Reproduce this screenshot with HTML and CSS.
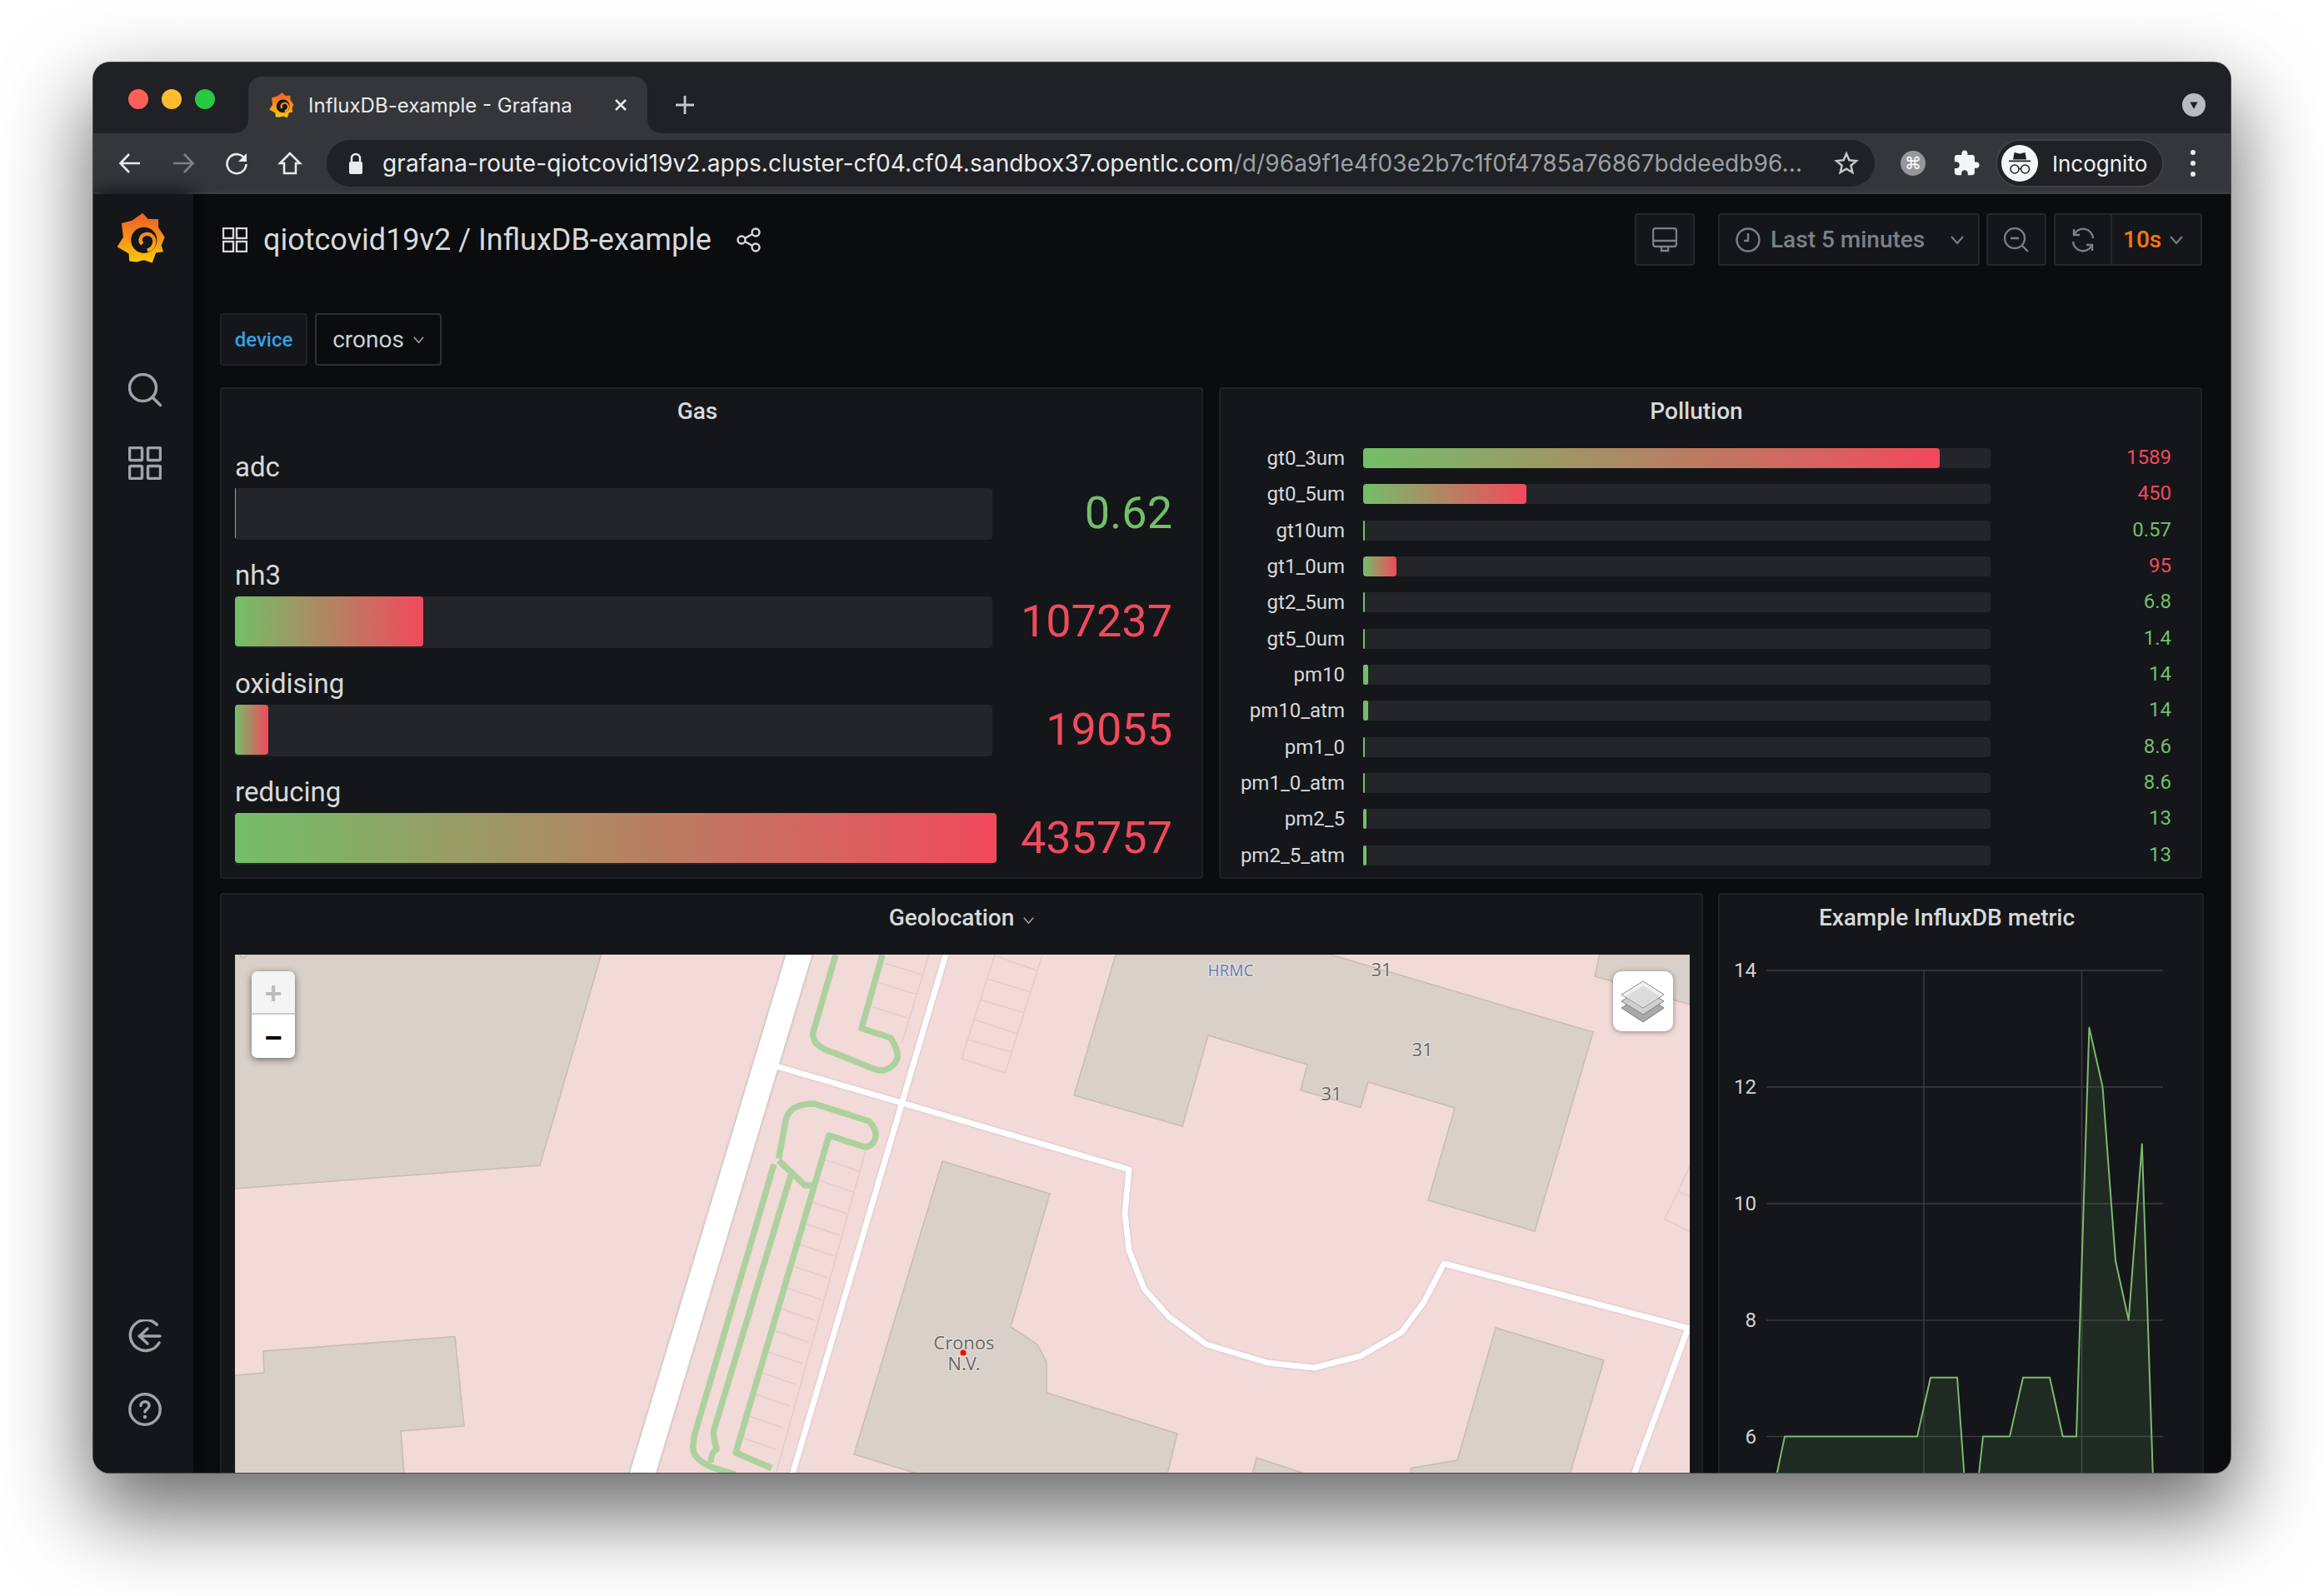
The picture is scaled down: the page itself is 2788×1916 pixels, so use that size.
FILE: index.html
```html
<!DOCTYPE html>
<html lang="en">
<head>
<meta charset="utf-8">
<title>InfluxDB-example - Grafana</title>
<link rel="stylesheet" href="styles.css">
</head>
<body>
<svg class="defs" width="0" height="0">
  <defs>
    <linearGradient id="gf" gradientUnits="userSpaceOnUse" x1="0" y1="48" x2="0" y2="228">
      <stop offset="0" stop-color="#f05a28"/><stop offset="1" stop-color="#fbca0a"/>
    </linearGradient>
    <symbol id="grafana" viewBox="20 40 190 195">
      <path fill="url(#gf)" d="M120 48L140 70 177 70 177 100 200 135 188 165 195 188 168 192 155 228 125 218 98 225 72 222 70 195 28 170 50 135 44 85 82 75z"/>
      <circle fill="#141619" cx="125" cy="146" r="47"/>
      <path fill="none" stroke="url(#gf)" stroke-width="13" d="M119 160c-12-10-8-32 12-36 20-3 35 13 31 33-3 14-13 23-25 26"/>
    </symbol>
  </defs>
</svg>
<div class="window">
  <header class="tabstrip">
    <div class="lights"><i class="light red"></i><i class="light amber"></i><i class="light green"></i></div>
    <div class="tab">
      <svg class="favicon"><use href="#grafana"/></svg>
      <span class="tab-title">InfluxDB-example - Grafana</span>
      <svg class="tab-close" viewBox="0 0 16 16"><path d="M2 2l12 12M14 2L2 14"/></svg>
    </div>
    <svg class="tab-new" viewBox="0 0 24 24"><path d="M12 1v22M1 12h22"/></svg>
    <div class="tab-menu"><svg viewBox="0 0 12 12"><path d="M2 3h8L6 10z"/></svg></div>
  </header>
  <div class="toolbar">
    <div class="nav"><svg class="ico-chrome" viewBox="0 0 30 30"><path d="M27 15H4M14 4L3.500 15 14 26"/></svg></div>
    <div class="nav dim"><svg class="ico-chrome" viewBox="0 0 30 30"><path d="M3 15h23M16 4l10.500 11L16 26"/></svg></div>
    <div class="nav"><svg class="ico-chrome" viewBox="0 0 30 30"><path d="M25 10A11.500 11.500 0 1 0 26.500 16"/><path class="solid" d="M27 3v10H17z"/></svg></div>
    <div class="nav"><svg class="ico-chrome" viewBox="0 0 30 30"><path d="M15 3L3 15h5v12h14V15h5z"/></svg></div>
    <div class="omnibox">
      <svg class="lock" viewBox="0 0 20 28"><path d="M5 12V8a5 5 0 0 1 10 0v4" fill="none" stroke="#e8eaed" stroke-width="2.500"/><rect x="2" y="12" width="16" height="15" rx="2" fill="#e8eaed"/></svg>
      <div class="url"><span class="host">grafana-route-qiotcovid19v2.apps.cluster-cf04.cf04.sandbox37.opentlc.com</span><span class="path">/d/96a9f1e4f03e2b7c1f0f4785a76867bddeedb96...</span></div>
      <svg class="star" viewBox="0 0 30 30"><path d="M15 3.500l3.400 7.800 8.400.8-6.400 5.600 1.900 8.300-7.300-4.400-7.300 4.400 1.900-8.300-6.400-5.600 8.400-.8z"/></svg>
    </div>
    <div class="ext"><span class="ext-cmd">⌘</span></div>
    <div class="ext"><svg class="puzzle" viewBox="0 0 24 24"><path d="M20.500 11H19V7c0-1.100-.9-2-2-2h-4V3.500C13 2.120 11.880 1 10.500 1S8 2.120 8 3.500V5H4c-1.100 0-1.990.9-1.990 2v3.800H3.500c1.490 0 2.700 1.210 2.700 2.700s-1.210 2.700-2.700 2.700H2V20c0 1.100.9 2 2 2h3.800v-1.500c0-1.490 1.210-2.700 2.700-2.700 1.490 0 2.700 1.210 2.700 2.700V22H17c1.100 0 2-.9 2-2v-4h1.500c1.380 0 2.500-1.120 2.500-2.500S21.880 11 20.500 11z"/></svg></div>
    <div class="profile">
      <svg class="incog" viewBox="0 0 44 44"><circle cx="22" cy="22" r="22" fill="#f4f5f6"/><path fill="#202124" d="M15.500 9l6.500 1.500L28.500 9l1.500 8.500H14z"/><path d="M9 19.300h26" stroke="#202124" stroke-width="1.800"/><g fill="none" stroke="#202124" stroke-width="1.500"><circle cx="16" cy="29" r="5"/><circle cx="28.500" cy="29" r="5"/><path d="M21 28.500h2.500"/></g></svg>
      <span class="profile-name">Incognito</span>
    </div>
    <div class="kebab"><i></i><i></i><i></i></div>
  </div>
  <div class="app">
    <nav class="sidebar">
      <svg class="logo"><use href="#grafana"/></svg>
      <svg class="side-ico first" viewBox="0 0 40 40"><circle cx="17.500" cy="17.500" r="16"/><path d="M29 29l9.500 9.500"/></svg>
      <svg class="side-ico" viewBox="0 0 40 40"><rect x="1.500" y="1.500" width="15" height="15" rx="1.500"/><rect x="23.500" y="1.500" width="15" height="15" rx="1.500"/><rect x="1.500" y="23.500" width="15" height="15" rx="1.500"/><rect x="23.500" y="23.500" width="15" height="15" rx="1.500"/></svg>
      <div class="side-spacer"></div>
      <svg class="side-ico" viewBox="0 0 40 40"><path d="M34.300 6.300A18.500 18.500 0 1 0 37 28"/><path d="M38 20H13M23 11l-9.500 9 9.500 9"/></svg>
      <svg class="side-ico" viewBox="0 0 40 40"><circle cx="20" cy="20" r="18.200"/><path d="M15 15.500c0-6.500 10-6.500 10 0 0 4-5 4-5 7.500"/><circle class="solid" cx="20" cy="29" r="2.200"/></svg>
    </nav>
    <main class="main">
      <div class="topbar">
        <svg class="title-ico" viewBox="0 0 30 30"><rect x="1" y="1" width="12" height="12"/><rect x="17" y="1" width="12" height="12"/><rect x="1" y="17" width="12" height="12"/><rect x="17" y="17" width="12" height="12"/></svg>
        <h1 class="dash-title">qiotcovid19v2 / InfluxDB-example</h1>
        <svg class="share-ico" viewBox="0 0 30 30"><circle cx="23" cy="6" r="4.500"/><circle cx="6" cy="15" r="4.500"/><circle cx="23" cy="24" r="4.500"/><path d="M10 13l9-5M10 17l9 5"/></svg>
        <div class="top-actions">
          <button class="tbtn square"><svg class="tb-ico" viewBox="0 0 30 30"><rect x="1" y="1" width="28" height="22" rx="3"/><path d="M1 16h28M11 23v5h8v-5"/></svg></button>
          <button class="tbtn range"><svg class="tb-ico" viewBox="0 0 30 30"><circle cx="15" cy="15" r="13.500"/><path d="M15 7v9H10"/></svg><span class="range-text">Last 5 minutes</span><svg class="chev big" viewBox="0 0 16 10"><path d="M1 1l7 8 7-8"/></svg></button>
          <button class="tbtn square tight"><svg class="tb-ico" viewBox="0 0 30 30"><circle cx="13" cy="13" r="12"/><path d="M8 13h10M22 22l7 7"/></svg></button>
          <div class="tbtn refresh">
            <div class="refresh-left"><svg class="tb-ico" viewBox="0 0 30 30"><path d="M4 2v7h7M4 9A12 12 0 0 1 27 13M26 28v-7h-7M26 21A12 12 0 0 1 3 17"/></svg></div>
            <div class="refresh-right"><span class="interval">10s</span><svg class="chev" viewBox="0 0 16 10"><path d="M1 1l7 8 7-8"/></svg></div>
          </div>
        </div>
      </div>
      <div class="varrow">
        <span class="var-label">device</span>
        <span class="var-value">cronos<svg class="chev small" viewBox="0 0 16 10"><path d="M1 1l7 8 7-8"/></svg></span>
      </div>
      <section class="row-a">
        <article class="panel">
          <h2 class="panel-title">Gas</h2>
          <div class="gauge">
            <div class="gauge-name">adc</div>
            <div class="gauge-track"><div class="gauge-fill thin" style="width:0.11%"></div></div>
            <div class="gauge-val ok">0.62</div>
          </div>
          <div class="gauge">
            <div class="gauge-name">nh3</div>
            <div class="gauge-track"><div class="gauge-fill" style="width:24.86%"></div></div>
            <div class="gauge-val bad">107237</div>
          </div>
          <div class="gauge">
            <div class="gauge-name">oxidising</div>
            <div class="gauge-track"><div class="gauge-fill" style="width:4.4%"></div></div>
            <div class="gauge-val bad">19055</div>
          </div>
          <div class="gauge">
            <div class="gauge-name">reducing</div>
            <div class="gauge-track"><div class="gauge-fill" style="width:100.5%"></div></div>
            <div class="gauge-val bad">435757</div>
          </div>
        </article>
        <article class="panel">
          <h2 class="panel-title">Pollution</h2>
          <div class="hbars">
            <div class="hbar"><span class="hbar-name">gt0_3um</span><div class="hbar-track"><div class="hbar-fill" style="width:91.9%"></div></div><span class="hbar-val bad">1589</span></div>
            <div class="hbar"><span class="hbar-name">gt0_5um</span><div class="hbar-track"><div class="hbar-fill" style="width:26%"></div></div><span class="hbar-val bad">450</span></div>
            <div class="hbar"><span class="hbar-name">gt10um</span><div class="hbar-track"><div class="hbar-fill flat" style="width:0.3%"></div></div><span class="hbar-val ok">0.57</span></div>
            <div class="hbar"><span class="hbar-name">gt1_0um</span><div class="hbar-track"><div class="hbar-fill" style="width:5.3%"></div></div><span class="hbar-val bad">95</span></div>
            <div class="hbar"><span class="hbar-name">gt2_5um</span><div class="hbar-track"><div class="hbar-fill flat" style="width:0.3%"></div></div><span class="hbar-val ok">6.8</span></div>
            <div class="hbar"><span class="hbar-name">gt5_0um</span><div class="hbar-track"><div class="hbar-fill flat" style="width:0.3%"></div></div><span class="hbar-val ok">1.4</span></div>
            <div class="hbar"><span class="hbar-name">pm10</span><div class="hbar-track"><div class="hbar-fill flat" style="width:0.8%"></div></div><span class="hbar-val ok">14</span></div>
            <div class="hbar"><span class="hbar-name">pm10_atm</span><div class="hbar-track"><div class="hbar-fill flat" style="width:0.8%"></div></div><span class="hbar-val ok">14</span></div>
            <div class="hbar"><span class="hbar-name">pm1_0</span><div class="hbar-track"><div class="hbar-fill flat" style="width:0.3%"></div></div><span class="hbar-val ok">8.6</span></div>
            <div class="hbar"><span class="hbar-name">pm1_0_atm</span><div class="hbar-track"><div class="hbar-fill flat" style="width:0.3%"></div></div><span class="hbar-val ok">8.6</span></div>
            <div class="hbar"><span class="hbar-name">pm2_5</span><div class="hbar-track"><div class="hbar-fill flat" style="width:0.5%"></div></div><span class="hbar-val ok">13</span></div>
            <div class="hbar"><span class="hbar-name">pm2_5_atm</span><div class="hbar-track"><div class="hbar-fill flat" style="width:0.5%"></div></div><span class="hbar-val ok">13</span></div>
          </div>
        </article>
      </section>
      <section class="row-b">
        <article class="panel geo">
          <h2 class="panel-title tall">Geolocation<svg class="chev small" viewBox="0 0 16 10"><path d="M1 1l7 8 7-8"/></svg></h2>
          <div class="map">
            <svg class="map-svg" viewBox="282 1146 1746 622">
              <g class="bld">
                <path d="M282 1146H721.500L648 1399 282 1427z"/>
                <path d="M282 1651l35-3-1-26 230-17.500 11 107.500-76 6 4 52H282z"/>
                <path d="M1131 1394l129 39-47 160 32 21 11 21v37l157 49-12 49H1104l-79-24z"/>
                <path d="M1339 1146h258l315 93-70 239-128-37 32-111-104-31-9 30.500-72-20.500 8-31-119-35-31 109-130-37z"/>
                <path d="M1795 1594l130 39-41 137H1693v-7.500l56-9.500z"/>
                <path d="M1508 1750l61 20h-66z"/>
                <path d="M1919.500 1146l-5.500 26 114 34v-60z"/>
              </g>
              <circle class="corner" cx="292" cy="1146" r="4"/>
              <g class="thin">
                <path d="M1040 1377L931 1770"/>
                <path d="M987 1391l44 15M980 1416l44 15M972 1442l44 15M964 1468l44 15M957 1493l44 15M949 1519l44 15M941 1545l44 15M934 1570l44 15M926 1596l44 15M919 1622l44 15M911 1647l44 15M904 1673l44 15M896 1699l44 15M888 1725l44 15"/>
                <path d="M1115 1146l-33 107M1061 1156l46 14M1055 1180l46 14M1047 1209l46 14"/>
                <path d="M1194 1146l-40 125 52.500 17 44.500-142M1192.500 1147l52.500 18M1185 1175l52 16M1176.500 1200l53 16M1169 1224l52 17M1162 1248l52 15"/>
                <path d="M2028 1400l-30 64 30 14M2014 1430l14 6"/>
              </g>
              <g class="green">
                <path d="M1003 1146l-27 93c-2 12 8 20 25 25l50 20c12 4 24-5 26-14 1-7-3-16-8-24l-35-11.500 25-88.500"/>
                <path d="M934.500 1391l8.500-46c3-14 14-20 34-20l66 21c6 6 8 12 8 17-1 10-8 14-13 14l-43-14-112 381 43 18.500"/>
                <path d="M934.500 1393l31.500 30h11.500"/>
                <path d="M929 1397.500L834 1721c-3 14-3 20 0 25 8 14 28 18 49 24"/>
                <path d="M949 1411l-92 305c-2 8 2 18 3 24-4 2-7 8-7 16"/>
              </g>
              <g class="road">
                <polygon class="wide" points="943,1146 975,1146 787,1770 755,1770"/>
                <path d="M1135 1146L951 1770"/>
                <path d="M932 1280l423 124-5 53 5 44 18 46 30 34 45 33 73 22 56 6 55.500-14 49.500-28.500 27-36.500 24-46 295 78"/>
                <path d="M2025 1597l-64 173"/>
              </g>
              <text class="lbl blue" x="1477" y="1172">HRMC</text>
              <text class="lbl" x="1658" y="1172">31</text>
              <text class="lbl" x="1707" y="1268">31</text>
              <text class="lbl" x="1598" y="1321">31</text>
              <text class="lbl" x="1157" y="1620">Cronos</text>
              <text class="lbl" x="1157" y="1645">N.V.</text>
              <circle class="pin" cx="1156" cy="1624" r="3.500"/>
            </svg>
            <div class="zoomctl">
              <span class="zoom-btn off">+</span>
              <span class="zoom-btn">−</span>
            </div>
            <div class="layers">
              <svg viewBox="0 0 72 72">
                <path fill="#a9a9a9" stroke="#7f7f7f" d="M10 44l26-16 25 16-25 17z"/>
                <path fill="#cfcfcf" stroke="#7f7f7f" d="M10 36l26-16 25 16-25 16z"/>
                <path fill="#f1f1f1" stroke="#8d8d8d" d="M10 28L36 12l25 16-25 16z"/>
                <path fill="#dcdcdc" d="M16 30l20-13 20 13-20 13z"/>
              </svg>
            </div>
          </div>
        </article>
        <article class="panel graph">
          <h2 class="panel-title tall offset">Example InfluxDB metric</h2>
          <svg class="graph-svg" viewBox="2062 1146 583 622">
            <g class="grid">
              <path d="M2120 1165h476M2120 1305h476M2120 1445h476M2120 1585h476M2120 1724.500h476"/>
              <path d="M2309 1165v610M2498.500 1165v610"/>
            </g>
            <g class="yaxis">
              <text x="2108" y="1173">14</text>
              <text x="2108" y="1313">12</text>
              <text x="2108" y="1453">10</text>
              <text x="2108" y="1593">8</text>
              <text x="2108" y="1733">6</text>
            </g>
            <path class="area" d="M2132.400 1770L2142 1724.400H2301L2317 1653.700H2349L2357.400 1770zM2375 1770L2380 1724.400H2412L2428 1653.700H2460L2475.700 1724.400H2492L2507.400 1233.600L2523.500 1304.700L2539 1513.600L2554.700 1584.800L2570.800 1373.600L2583.800 1770z"/>
            <path class="line" d="M2132.400 1770L2142 1724.400H2301L2317 1653.700H2349L2357.400 1770M2375 1770L2380 1724.400H2412L2428 1653.700H2460L2475.700 1724.400H2492L2507.400 1233.600L2523.500 1304.700L2539 1513.600L2554.700 1584.800L2570.800 1373.600L2583.800 1770"/>
          </svg>
        </article>
      </section>
    </main>
  </div>
</div>
</body>
</html>
```
FILE: styles.css
```css
* { box-sizing: border-box; }
html, body { margin: 0; height: 100%; }
body {
  background: #fff;
  padding: 75px 111px 0 112px;
  overflow: hidden;
  font-family: Roboto, "Liberation Sans", sans-serif;
}
.defs { position: absolute; }
.window {
  width: 2565px;
  height: 1693px;
  border-radius: 20px;
  overflow: hidden;
  display: flex;
  flex-direction: column;
  background: #202124;
  box-shadow: 0 0 0 1px #4a4a4c, 0 44px 100px 6px rgba(0,0,0,.58);
}
/* browser chrome */
.tabstrip {
  height: 85px;
  flex: none;
  display: flex;
  align-items: flex-start;
  padding-left: 42px;
  background: #202124;
}
.lights { display: flex; gap: 16px; margin-top: 32px; }
.light { width: 24px; height: 24px; border-radius: 50%; display: block; }
.red { background: #ff5f57; }
.amber { background: #febc2e; }
.green { background: #28c840; }
.tab {
  position: relative;
  margin: 17px 0 0 40px;
  width: 479px;
  height: 68px;
  display: flex;
  align-items: center;
  padding-left: 24px;
  background: #35363a;
  border-radius: 16px 16px 0 0;
}
.tab::before, .tab::after {
  content: "";
  position: absolute;
  bottom: 0;
  width: 16px;
  height: 16px;
}
.tab::before { left: -16px; background: radial-gradient(circle at 0 0, transparent 15.500px, #35363a 16px); }
.tab::after { right: -16px; background: radial-gradient(circle at 100% 0, transparent 15.500px, #35363a 16px); }
.favicon { width: 32px; height: 34px; flex: none; }
.tab-title { margin-left: 16px; font: 24px Inter, Roboto, sans-serif; color: #e8eaed; white-space: nowrap; width: 330px; }
.tab-close { width: 16px; height: 16px; margin-left: 37px; flex: none; fill: none; stroke: #e8eaed; stroke-width: 2.500; }
.tab-new { width: 24px; height: 24px; margin: 39px 0 0 33px; fill: none; stroke: #c4c7c9; stroke-width: 2.800; }
.tab-menu {
  margin: 37px 30px 0 auto;
  width: 28px; height: 28px;
  border-radius: 50%;
  background: #b8bbc0;
  display: flex; align-items: center; justify-content: center;
}
.tab-menu svg { width: 14px; height: 14px; fill: #202124; }
.toolbar {
  height: 73px;
  flex: none;
  display: flex;
  align-items: flex-start;
  padding: 0 8px 0 12px;
  background: #35363a;
  border-bottom: 3px solid #3d3e42;
}
.nav { width: 64px; height: 56px; margin-top: 8px; display: flex; align-items: center; justify-content: center; }
.ico-chrome { width: 30px; height: 30px; fill: none; stroke: #e8eaed; stroke-width: 2.600; }
.ico-chrome .solid { fill: #e8eaed; stroke: none; }
.dim .ico-chrome { stroke: #7f8083; }
.omnibox {
  flex: 1;
  height: 56px;
  margin: 8px 0 0 12px;
  display: flex;
  align-items: center;
  padding-left: 25px;
  border-radius: 28px;
  background: #202124;
}
.lock { width: 20px; height: 28px; flex: none; }
.url { flex: 1; margin-left: 22px; font: 28px Inter, Roboto, sans-serif; white-space: nowrap; letter-spacing: .1px; }
.host { color: #e8eaed; }
.path { color: #9aa0a6; }
.star { width: 30px; height: 30px; margin-right: 19px; flex: none; fill: none; stroke: #c4c7c9; stroke-width: 2.500; }
.ext { width: 64px; height: 56px; margin-top: 8px; display: flex; align-items: center; justify-content: center; flex: none; }
.omnibox + .ext { margin-left: 14px; }
.ext-cmd {
  width: 30px; height: 30px; border-radius: 50%;
  background: #97979a;
  color: #fff;
  font: 20px/30px "DejaVu Sans", sans-serif;
  text-align: center;
}
.puzzle { width: 34px; height: 34px; fill: #f4f5f6; }
.profile {
  flex: none;
  width: 198px;
  height: 54px;
  margin: 9px 0 0 5px;
  padding-left: 5px;
  display: flex;
  align-items: center;
  border-radius: 27px;
  background: #202124;
  box-shadow: 0 0 0 2px #3f4044;
}
.incog { width: 44px; height: 44px; flex: none; }
.profile-name { margin-left: 17px; font: 26px Inter, Roboto, sans-serif; color: #f1f3f4; }
.kebab { width: 74px; height: 56px; margin-top: 8px; display: flex; flex-direction: column; align-items: center; justify-content: center; gap: 7px; }
.kebab i { display: block; width: 6px; height: 6px; border-radius: 50%; background: #e8eaed; }
/* app */
.app { flex: 1; min-height: 0; display: flex; background: #0b0c0e; }
.sidebar {
  width: 120px;
  flex: none;
  display: flex;
  flex-direction: column;
  align-items: center;
  padding: 20px 0 56px 4px;
  gap: 48px;
  background: #141619;
  box-shadow: 0 0 24px rgba(0,0,0,.9);
  position: relative;
}
.logo { width: 63px; height: 65px; margin-left: -10px; flex: none; }
.side-ico { width: 40px; height: 40px; flex: none; fill: none; stroke: #9ea3ae; stroke-width: 3.500; stroke-linecap: round; stroke-linejoin: round; }
.side-ico .solid { fill: #9ea3ae; stroke: none; }
.side-ico.first { margin-top: 82px; }
.side-spacer { flex: 1; margin-bottom: -48px; }
.main {
  flex: 1;
  min-width: 0;
  padding: 23px 34px 0 32px;
  display: flex;
  flex-direction: column;
}
.topbar { height: 63px; flex: none; display: flex; align-items: center; }
.title-ico { width: 30px; height: 30px; margin-left: 3px; fill: none; stroke: #d8d9da; stroke-width: 2.400; flex: none; }
.dash-title { margin: 0 0 0 19px; font-size: 36px; font-weight: 400; color: #d8d9da; white-space: nowrap; }
.share-ico { width: 30px; height: 30px; margin-left: 30px; fill: none; stroke: #d8d9da; stroke-width: 2.400; flex: none; }
.top-actions { margin-left: auto; display: flex; height: 63px; }
.tbtn {
  height: 63px;
  padding: 0;
  display: flex;
  align-items: center;
  justify-content: center;
  background: #141619;
  border: 2px solid #25272b;
  border-radius: 4px;
  font-family: inherit;
}
.square { width: 72px; margin-right: 28px; }
.square.tight { margin: 0 9px 0 8px; }
.range { width: 314px; justify-content: flex-start; padding-left: 19px; }
.tb-ico { width: 30px; height: 30px; fill: none; stroke: #7b8087; stroke-width: 2.400; flex: none; }
.range-text { margin-left: 12px; font-size: 28px; font-weight: 500; color: #7b8087; white-space: nowrap; }
.chev { width: 16px; height: 10px; fill: none; stroke: #7b8087; stroke-width: 2; flex: none; }
.chev.big { margin-left: 31px; }
.chev.small { width: 13px; height: 8px; margin-left: 11px; stroke: #9fa3a9; }
.refresh { width: 178px; justify-content: flex-start; }
.refresh-left { width: 68px; height: 100%; display: flex; align-items: center; justify-content: center; border-right: 2px solid #25272b; }
.refresh-right { flex: 1; display: flex; align-items: center; padding-left: 13px; gap: 10px; }
.interval { font-size: 28px; font-weight: 500; color: #ff780a; }
.varrow { height: 63px; margin-top: 57px; flex: none; display: flex; gap: 9px; }
.var-label {
  width: 105px;
  display: flex; align-items: center; justify-content: center;
  background: #141619;
  border: 2px solid #202226;
  border-radius: 4px;
  font-size: 24px;
  font-weight: 500;
  color: #33a2e5;
}
.var-value {
  width: 152px;
  display: flex; align-items: center; justify-content: center;
  background: #0b0c0e;
  border: 2px solid #2c3034;
  border-radius: 4px;
  font-size: 28px;
  color: #c7d0d9;
}
.row-a {
  margin-top: 26px;
  flex: none;
  display: grid;
  grid-template-columns: 1fr 1fr;
  column-gap: 19px;
  height: 590px;
}
.row-b {
  margin-top: 17px;
  flex: none;
  display: grid;
  grid-template-columns: 1780px 583px;
  column-gap: 18px;
  height: 730px;
}
.panel {
  min-width: 0;
  background: #141619;
  border-radius: 4px;
  box-shadow: inset 0 0 0 2px #1f2125;
  overflow: hidden;
}
.panel-title {
  margin: 0;
  height: 53px;
  padding: 12px 34px 0 0;
  text-align: center;
  font-size: 28px;
  line-height: 34px;
  font-weight: 500;
  color: #d8d9da;
}
.panel-title.tall { height: 74px; padding: 13px 0 0; display: flex; align-items: flex-start; justify-content: center; }
.panel-title .chev { margin-top: 16px; }
.panel-title.offset { padding-right: 34px; }
.gauge {
  display: grid;
  grid-template-columns: 909px 1fr;
  grid-template-rows: 68px 62px;
  margin: 0 37px 0 18px;
}
.gauge-name { grid-column: 1 / 3; font-size: 33px; line-height: 38px; padding-top: 24px; height: 68px; color: #d8d9da; }
.gauge-track { height: 62px; background: #232528; border-radius: 4px; }
.gauge-fill { height: 60px; border-radius: 4px; background: linear-gradient(90deg, #73bf69, #f2495c); }
.gauge-fill.thin { background: #73bf69; border-radius: 0; }
.gauge-val { text-align: right; font-size: 54px; line-height: 62px; margin-top: -1px; white-space: nowrap; }
.ok { color: #73bf69; }
.bad { color: #f2495c; }
.hbars { padding: 20px 37px 0 17px; }
.hbar {
  display: grid;
  grid-template-columns: 134px 753px 1fr;
  column-gap: 0;
  height: 43.350px;
  align-items: start;
}
.hbar-name { text-align: right; font-size: 24px; line-height: 24px; color: #d8d9da; white-space: nowrap; }
.hbar-track { margin-left: 22px; width: 753px; height: 24px; background: #232528; border-radius: 4px; }
.hbar-fill { height: 24px; border-radius: 4px; background: linear-gradient(90deg, #73bf69, #f2495c); }
.hbar-fill.flat { background: #73bf69; border-radius: 2px; }
.hbar-val { text-align: right; font-size: 24px; line-height: 22px; padding-left: 22px; }
.map { position: relative; margin: 0 16px 0 18px; overflow: hidden; background: #f2dad9; height: 660px; }
.map-svg { display: block; width: 100%; height: 622px; }
.bld path { fill: #d9d0c9; stroke: #c9bcb0; stroke-width: 1.500; }
.corner { fill: none; stroke: #c5c0bb; stroke-width: 2; }
.thin path { fill: none; stroke: #e3cccb; stroke-width: 1.500; }
.green path { fill: none; stroke: #add19e; stroke-width: 7.500; stroke-linejoin: round; }
.road { filter: drop-shadow(0 0 1px #bdb3b1); }
.road path { fill: none; stroke: #fff; stroke-width: 7; stroke-linejoin: round; }
.road .wide { fill: #fff; stroke: #d8c8c6; stroke-width: 1; }
.lbl { font: 22px "Noto Sans", sans-serif; fill: #6c6c6c; text-anchor: middle; paint-order: stroke; stroke: rgba(255,255,255,.5); stroke-width: 2px; }
.lbl.blue { fill: #6a7fb5; font-size: 19px; }
.pin { fill: #f00; }
.zoomctl {
  position: absolute;
  left: 20px;
  top: 20px;
  width: 52px;
  height: 104px;
  display: flex;
  flex-direction: column;
  border-radius: 7px;
  overflow: hidden;
  box-shadow: 0 2px 8px rgba(0,0,0,.5);
}
.zoom-btn {
  height: 52px;
  padding-top: 3px;
  display: flex; align-items: center; justify-content: center;
  background: #fff;
  color: #000;
  font: 700 36px "Liberation Sans", sans-serif;
}
.zoom-btn.off { background: #f4f4f4; color: #bbb; border-bottom: 2px solid #ccc; }
.layers {
  position: absolute;
  right: 20px;
  top: 20px;
  width: 72px;
  height: 72px;
  border-radius: 10px;
  background: #fff;
  box-shadow: 0 1px 6px rgba(0,0,0,.4);
}
.layers svg { display: block; width: 72px; height: 72px; }
.graph-svg { display: block; width: 583px; height: 622px; }
.grid path { fill: none; stroke: #3a3c40; stroke-width: 1.500; }
.yaxis text { font: 24px Roboto, sans-serif; fill: #d0d3d8; text-anchor: end; }
.area { fill: rgba(115,191,105,.12); }
.line { fill: none; stroke: #7eb86f; stroke-width: 2; stroke-linejoin: round; }
```
